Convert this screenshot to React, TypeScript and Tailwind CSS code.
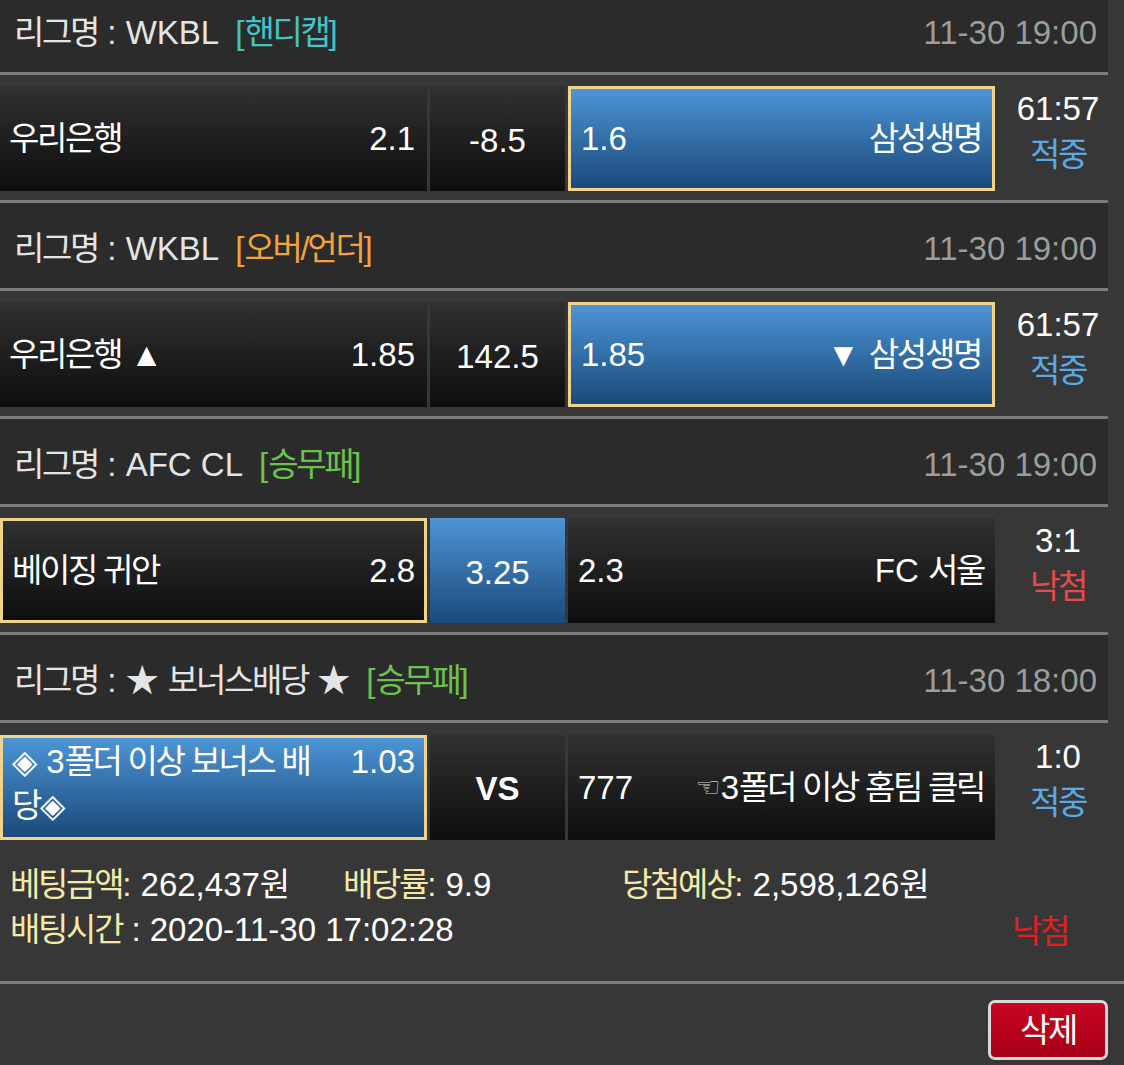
import React from "react";

const K = ({ children }: { children: React.ReactNode }) => (
  <span className="tracking-[-0.07em]">{children}</span>
);

type HeaderProps = {
  league: React.ReactNode;
  tag: string;
  tagClass: string;
  time: string;
};

function Header({ league, tag, tagClass, time }: HeaderProps) {
  return (
    <div className="h-[85px] bg-[#2b2b2b] flex items-center justify-between pl-[14px] pr-[11px] pt-[6px] leading-[40px]">
      <div className="text-[#e4e4e4] whitespace-nowrap">
        <K>리그명</K> : {league}
        <span className={`ml-[16px] ${tagClass}`}>
          [<K>{tag}</K>]
        </span>
      </div>
      <div className="text-[#9c9c9c]">{time}</div>
    </div>
  );
}

function Sep() {
  return <div className="h-[3px] bg-[#7b7b7b]" />;
}

type CellProps = {
  blue?: boolean;
  selected?: boolean;
  className?: string;
  children: React.ReactNode;
};

function Cell({ blue, selected, className = "", children }: CellProps) {
  const bg = blue
    ? "bg-linear-to-b from-[#4d95d6] to-[#1b4a7b]"
    : "bg-linear-to-b from-[#313131] to-[#0e0e0e]";
  const border = selected ? "border-[3px] border-[#f1d38b]" : "";
  return (
    <div className={`h-[105px] shrink-0 text-white ${bg} ${border} ${className}`}>
      {children}
    </div>
  );
}

function Score({ score, result, resultClass }: { score: string; result: string; resultClass: string }) {
  return (
    <div className="w-[110px] shrink-0 pl-[10px] flex flex-col items-center leading-[46px]">
      <div className="text-white">{score}</div>
      <div className={resultClass}>
        <K>{result}</K>
      </div>
    </div>
  );
}

function Row({ children }: { children: React.ReactNode }) {
  return (
    <div className="h-[125px] pt-[11px] flex items-start gap-[3px]">{children}</div>
  );
}

export default function App() {
  return (
    <div className="w-[1124px] h-[1065px] overflow-hidden bg-[#373737] text-[33px] font-['Liberation_Sans','Noto_Sans_CJK_KR',sans-serif]">
      <div className="-mt-[13px] w-[1108px]">
        {/* Bet 1 */}
        <Header league="WKBL" tag="핸디캡" tagClass="text-[#46c3c5]" time="11-30 19:00" />
        <Sep />
        <Row>
          <Cell className="w-[427px] flex items-center justify-between pl-[9px] pr-[12px]">
            <K>우리은행</K>
            <span>2.1</span>
          </Cell>
          <Cell className="w-[135px] flex items-center justify-center pt-[5px]">-8.5</Cell>
          <Cell blue selected className="w-[427px] flex items-center justify-between pl-[10px] pr-[11px]">
            <span>1.6</span>
            <K>삼성생명</K>
          </Cell>
          <Score score="61:57" result="적중" resultClass="text-[#5ba9e4]" />
        </Row>
        <Sep />

        {/* Bet 2 */}
        <Header league="WKBL" tag="오버/언더" tagClass="text-[#f2a33c]" time="11-30 19:00" />
        <Sep />
        <Row>
          <Cell className="w-[427px] flex items-center justify-between pl-[9px] pr-[12px]">
            <span>
              <K>우리은행</K> ▲
            </span>
            <span>1.85</span>
          </Cell>
          <Cell className="w-[135px] flex items-center justify-center pt-[5px]">142.5</Cell>
          <Cell blue selected className="w-[427px] flex items-center justify-between pl-[10px] pr-[11px]">
            <span>1.85</span>
            <span>
              ▼ <K>삼성생명</K>
            </span>
          </Cell>
          <Score score="61:57" result="적중" resultClass="text-[#5ba9e4]" />
        </Row>
        <Sep />

        {/* Bet 3 */}
        <Header league="AFC CL" tag="승무패" tagClass="text-[#6cc24e]" time="11-30 19:00" />
        <Sep />
        <Row>
          <Cell selected className="w-[427px] flex items-center justify-between pl-[9px] pr-[9px]">
            <K>베이징 귀안</K>
            <span>2.8</span>
          </Cell>
          <Cell blue className="w-[135px] flex items-center justify-center pt-[5px]">3.25</Cell>
          <Cell className="w-[427px] flex items-center justify-between pl-[10px] pr-[11px]">
            <span>2.3</span>
            <span>
              FC <K>서울</K>
            </span>
          </Cell>
          <Score score="3:1" result="낙첨" resultClass="text-[#e64a4a]" />
        </Row>
        <Sep />

        {/* Bet 4 */}
        <Header
          league={
            <>
              ★ <K>보너스배당</K> ★
            </>
          }
          tag="승무패"
          tagClass="text-[#6cc24e]"
          time="11-30 18:00"
        />
        <Sep />
        <div className="h-[125px] pt-[12px] flex items-start gap-[3px]">
          <Cell blue selected className="w-[427px] flex items-start pl-[9px] pr-[9px] pt-[2px] leading-[44px]">
            <div className="flex-1 min-w-0">
              ◈ 3<K>폴더 이상 보너스 배당</K>◈
            </div>
            <div className="ml-[20px]">1.03</div>
          </Cell>
          <Cell className="w-[135px] flex items-center justify-center font-bold pt-[2px]">VS</Cell>
          <Cell className="w-[427px] flex items-center justify-between pl-[10px] pr-[11px]">
            <span>777</span>
            <span className="whitespace-nowrap">
              <span className="text-[28px] text-[#d0d0d0] font-['DejaVu_Sans',sans-serif] align-[2px]">☜</span>3
              <K>폴더 이상 홈팀 클릭</K>
            </span>
          </Cell>
          <div className="-mt-px">
            <Score score="1:0" result="적중" resultClass="text-[#5ba9e4]" />
          </div>
        </div>
      </div>

      {/* Info */}
      <div className="px-[10px] pt-[14px] pb-[27px] leading-[45px] text-white">
        <div className="flex">
          <div className="w-[333px]">
            <span className="text-[#f3eaa9]">
              <K>베팅금액</K>:
            </span>{" "}
            262,437<K>원</K>
          </div>
          <div className="w-[279px]">
            <span className="text-[#f3eaa9]">
              <K>배당률</K>:
            </span>{" "}
            9.9
          </div>
          <div>
            <span className="text-[#f3eaa9]">
              <K>당첨예상</K>:
            </span>{" "}
            2,598,126<K>원</K>
          </div>
        </div>
        <div className="flex justify-between pr-[46px]">
          <div>
            <span className="text-[#f3eaa9]">
              <K>배팅시간</K>
            </span>{" "}
            : 2020-11-30 17:02:28
          </div>
          <div className="text-[#e21f1f] pt-[2px]">
            <K>낙첨</K>
          </div>
        </div>
      </div>
      <div className="h-[3px] bg-[#7b7b7b]" />
      <div className="flex justify-end pr-[16px] pt-[16px]">
        <button className="w-[120px] h-[60px] rounded-[7px] border-[3px] border-[#d9d9d9] bg-linear-to-b from-[#c8061f] to-[#a8001a] text-white leading-none flex items-center justify-center">
          <K>삭제</K>
        </button>
      </div>
    </div>
  );
}
